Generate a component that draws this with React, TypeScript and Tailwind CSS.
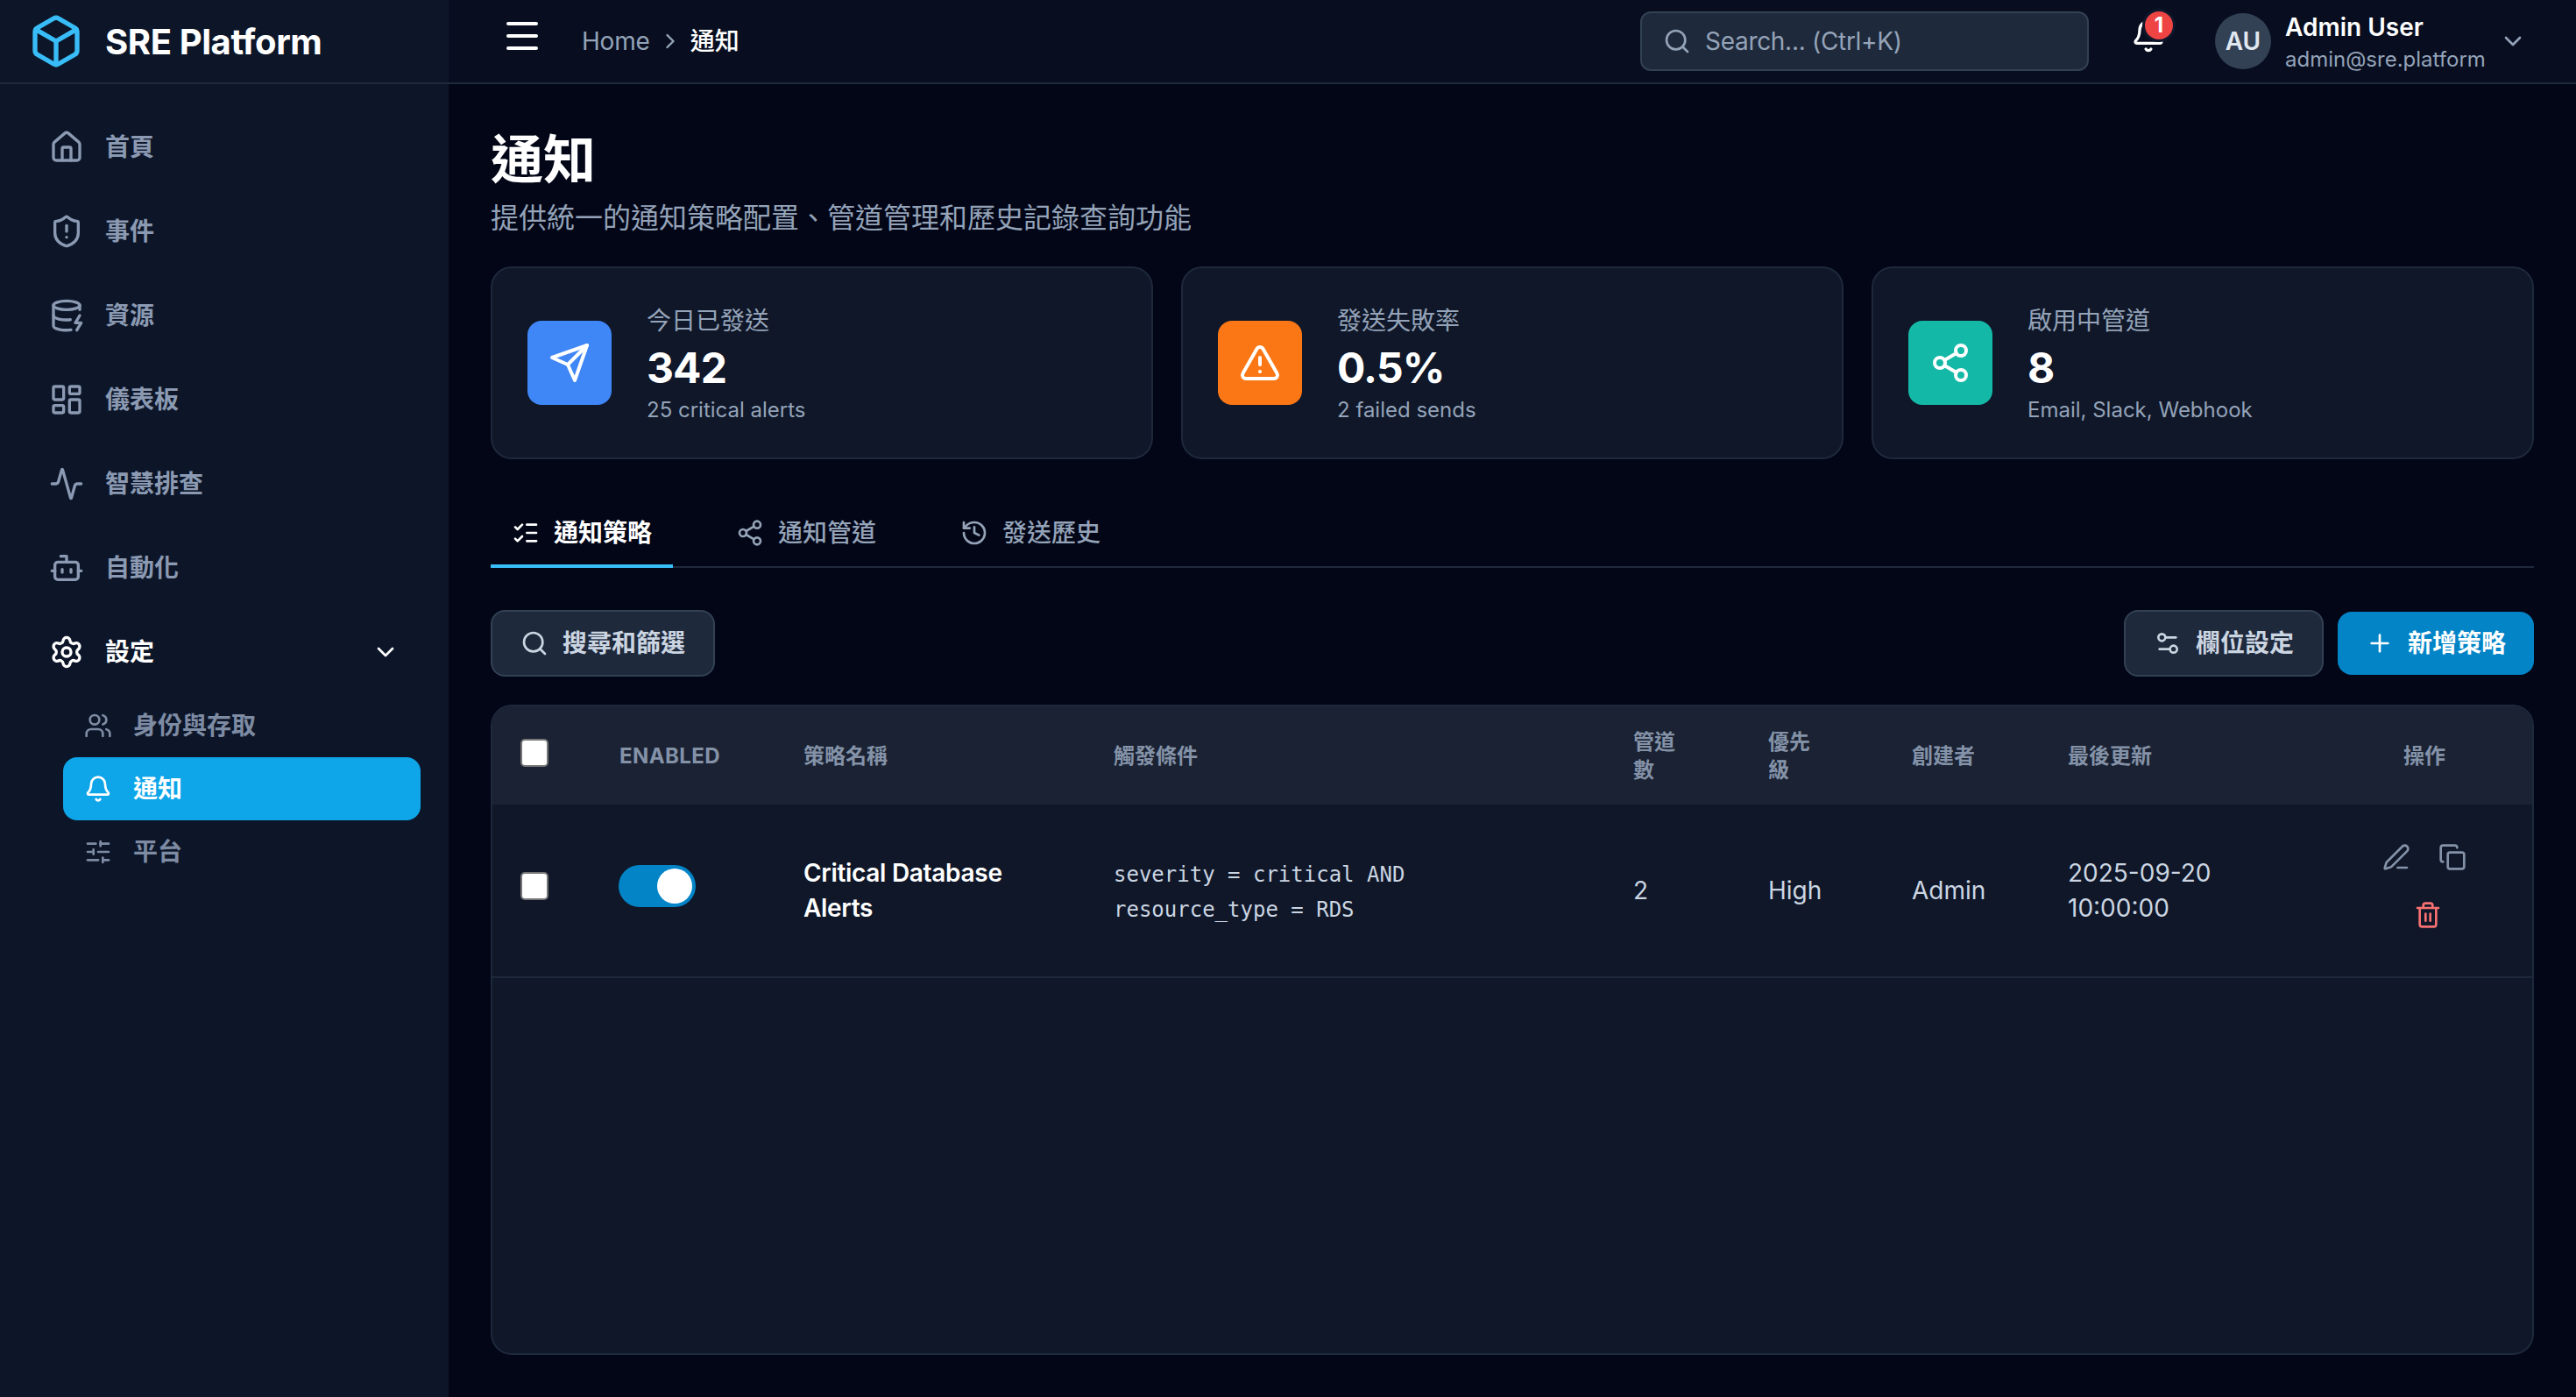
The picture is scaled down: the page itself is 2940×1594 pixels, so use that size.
import React from "react";
import {
  Box, House, ShieldAlert, DatabaseZap, LayoutDashboard, Activity, Bot, Settings, ChevronDown, ChevronRight,
  Users, Bell, SlidersHorizontal, Menu, Search, TriangleAlert, Share2, ListChecks, History, Settings2,
  Plus, PenLine, Copy, Trash2,
} from "lucide-react";

const navItems = [
  { label: "首頁", Icon: House },
  { label: "事件", Icon: ShieldAlert },
  { label: "資源", Icon: DatabaseZap },
  { label: "儀表板", Icon: LayoutDashboard },
  { label: "智慧排查", Icon: Activity },
  { label: "自動化", Icon: Bot },
];

function SendIcon({ size }: { size: number }) {
  return (
    <svg width={size} height={size} viewBox="0 0 24 24" fill="none" stroke="currentColor" strokeWidth={2} strokeLinecap="round" strokeLinejoin="round">
      <path d="m22 2-7 20-4-9-9-4Z" />
      <path d="M22 2 11 13" />
    </svg>
  );
}

function Sidebar() {
  return (
    <aside className="flex h-full w-[512px] shrink-0 flex-col bg-[#0d1629]">
      <div className="flex h-[96px] shrink-0 items-center gap-[24px] border-b-2 border-[#1e293b] pl-[32px]">
        <Box size={64} strokeWidth={2} className="text-[#38bdf8]" />
        <span className="pt-[2px] text-[40px] leading-[60px] font-bold tracking-[-0.4px] text-white">SRE Platform</span>
      </div>
      <nav className="flex flex-col px-[40px] pt-[24px]">
        {navItems.map(({ label, Icon }) => (
          <div key={label} className="flex h-[96px] items-center gap-[24px] pl-[16px] text-[#8b9ab2]">
            <Icon size={40} strokeWidth={2} />
            <span className="text-[28px] leading-[40px] font-semibold">{label}</span>
          </div>
        ))}
        <div className="flex h-[96px] items-center gap-[24px] pl-[16px] text-white">
          <Settings size={40} strokeWidth={2} />
          <span className="flex-1 text-[28px] leading-[40px] font-bold">設定</span>
          <ChevronDown size={32} strokeWidth={2} className="mr-[16px]" />
        </div>
        <div className="ml-[32px] flex w-[408px] flex-col">
          <div className="flex h-[72px] items-center gap-[24px] px-[24px] text-[#7d8ba3]">
            <Users size={32} strokeWidth={2} />
            <span className="text-[28px] leading-[40px] font-semibold">身份與存取</span>
          </div>
          <div className="flex h-[72px] items-center gap-[24px] rounded-[16px] bg-[#0ea5e9] px-[24px] text-white">
            <Bell size={32} strokeWidth={2} />
            <span className="text-[28px] leading-[40px] font-bold">通知</span>
          </div>
          <div className="flex h-[72px] items-center gap-[24px] px-[24px] text-[#7d8ba3]">
            <SlidersHorizontal size={32} strokeWidth={2} />
            <span className="text-[28px] leading-[40px] font-semibold">平台</span>
          </div>
        </div>
      </nav>
    </aside>
  );
}

function TopBar() {
  return (
    <header className="flex h-[96px] shrink-0 items-center justify-between border-b-2 border-[#1e293b] bg-[#080e20] pl-[60px] pr-[56px]">
      <div className="flex items-center">
        <Menu size={48} strokeWidth={2} className="mb-[12px] text-white" />
        <span className="ml-[44px] text-[28px] leading-[40px] tracking-[-0.2px] text-[#94a3b8]">Home</span>
        <ChevronRight size={28} strokeWidth={2} className="mx-[9px] text-[#94a3b8]" />
        <span className="text-[28px] leading-[40px] font-medium text-white">通知</span>
      </div>
      <div className="flex items-center">
        <div className="flex h-[68px] w-[512px] items-center gap-[16px] rounded-[12px] border-2 border-[#334155] bg-[#1e293b] pl-[24px]">
          <Search size={32} strokeWidth={2} className="text-[#94a3b8]" />
          <span className="text-[28px] leading-[40px] tracking-[-0.3px] text-[#94a3b8]">Search... (Ctrl+K)</span>
        </div>
        <div className="relative mb-[12px] ml-[48px] h-[40px] w-[40px] text-white">
          <Bell size={40} strokeWidth={2} />
          <span className="absolute -top-[11px] left-[13px] flex h-[38px] w-[38px] items-center justify-center rounded-full border-[3px] border-[#0f172a] bg-[#ef4444] text-[24px] leading-none font-bold text-white">1</span>
        </div>
        <div className="ml-[56px] flex h-[64px] w-[64px] items-center justify-center rounded-full bg-[#334155] text-[28px] font-semibold text-[#e2e8f0]">AU</div>
        <div className="ml-[16px] flex w-[226px] flex-col pt-[2px]">
          <span className="text-[28px] leading-[40px] font-semibold text-white">Admin User</span>
          <span className="text-[24px] leading-[34px] text-[#94a3b8]">admin@sre.platform</span>
        </div>
        <ChevronDown size={32} strokeWidth={2} className="ml-[18px] text-[#94a3b8]" />
      </div>
    </header>
  );
}

const stats = [
  { label: "今日已發送", value: "342", sub: "25 critical alerts", Icon: SendIcon, color: "bg-[#3f86f6]" },
  { label: "發送失敗率", value: "0.5%", sub: "2 failed sends", Icon: TriangleAlert, color: "bg-[#fb7716]" },
  { label: "啟用中管道", value: "8", sub: "Email, Slack, Webhook", Icon: Share2, color: "bg-[#14b8a6]" },
];

function StatCards() {
  return (
    <div className="mt-[31px] grid grid-cols-3 gap-[32px]">
      {stats.map(({ label, value, sub, Icon, color }) => (
        <div key={label} className="flex h-[220px] items-center gap-[40px] rounded-[24px] border-2 border-[#1e293b] bg-[#0f1729] px-[40px]">
          <div className={`flex h-[96px] w-[96px] items-center justify-center rounded-[16px] text-white ${color}`}>
            <Icon size={48} />
          </div>
          <div className="flex flex-col pt-[2px]">
            <span className="text-[28px] leading-[40px] text-[#94a3b8]">{label}</span>
            <span className="pt-[2px] text-[48px] leading-[64px] font-bold tracking-[-0.9px] text-white">{value}</span>
            <span className="text-[24px] leading-[32px] text-[#94a3b8]">{sub}</span>
          </div>
        </div>
      ))}
    </div>
  );
}

function Tabs() {
  const tabs = [
    { label: "通知策略", Icon: ListChecks, active: true },
    { label: "通知管道", Icon: Share2, active: false },
    { label: "發送歷史", Icon: History, active: false },
  ];
  return (
    <div className="mt-[44px] flex gap-[48px] border-b-2 border-[#1e293b]">
      {tabs.map(({ label, Icon, active }) => (
        <div
          key={label}
          className={
            active
              ? "-mb-[2px] flex h-[80px] items-center gap-[16px] border-b-4 border-[#38bdf8] px-[24px] pt-[4px] text-white"
              : "-mb-[2px] flex h-[80px] items-center gap-[16px] border-b-4 border-transparent px-[24px] pt-[4px] text-[#94a3b8]"
          }
        >
          <Icon size={32} strokeWidth={2} />
          <span className={active ? "text-[28px] leading-[40px] font-semibold" : "text-[28px] leading-[40px] font-medium"}>{label}</span>
        </div>
      ))}
    </div>
  );
}

function Toolbar() {
  return (
    <div className="mt-[48px] flex items-center justify-between">
      <button className="flex h-[76px] items-center gap-[16px] rounded-[16px] border-2 border-[#334155] bg-[#1e293b] px-[32px] text-[#cbd5e1]">
        <Search size={32} strokeWidth={2} />
        <span className="text-[28px] leading-[40px] font-semibold">搜尋和篩選</span>
      </button>
      <div className="flex items-center gap-[16px]">
        <button className="flex h-[76px] items-center gap-[16px] rounded-[16px] border-2 border-[#334155] bg-[#1e293b] px-[32px] text-[#cbd5e1]">
          <Settings2 size={32} strokeWidth={2} />
          <span className="text-[28px] leading-[40px] font-semibold">欄位設定</span>
        </button>
        <button className="flex h-[72px] items-center gap-[16px] rounded-[16px] bg-[#0284c7] px-[32px] text-white">
          <Plus size={32} strokeWidth={2} />
          <span className="text-[28px] leading-[40px] font-semibold">新增策略</span>
        </button>
      </div>
    </div>
  );
}

const thClass = "px-[32px] pt-[2px] align-middle text-[24px] leading-[32px] font-bold text-[#8492a8]";
const tdClass = "border-b-2 border-[#1e293b] px-[32px] align-middle";
const cellText = "text-[28px] leading-[40px] text-[#cbd5e1]";
const boxClass = "block h-[32px] w-[32px] appearance-none rounded-[5px] border-2 border-[#767676] bg-white";

function PolicyTable() {
  return (
    <div className="mt-[32px] min-h-0 flex-1 overflow-hidden rounded-[24px] border-2 border-[#1e293b] bg-[#0f1729]">
      <table className="w-full table-fixed border-collapse">
        <colgroup>
          <col className="w-[113px]" />
          <col className="w-[210px]" />
          <col className="w-[354px]" />
          <col className="w-[593px]" />
          <col className="w-[154px]" />
          <col className="w-[164px]" />
          <col className="w-[178px]" />
          <col className="w-[316px]" />
          <col className="w-[246px]" />
        </colgroup>
        <thead>
          <tr className="h-[112px] bg-[#1a2233]">
            <th className={`${thClass} text-left`}><input type="checkbox" className={`${boxClass} mb-[8px]`} /></th>
            <th className={`${thClass} text-left tracking-[0.4px]`}>ENABLED</th>
            <th className={`${thClass} text-left`}>策略名稱</th>
            <th className={`${thClass} text-left`}>觸發條件</th>
            <th className={`${thClass} text-left`}>管道<br />數</th>
            <th className={`${thClass} text-left`}>優先<br />級</th>
            <th className={`${thClass} text-left`}>創建者</th>
            <th className={`${thClass} text-left`}>最後更新</th>
            <th className={`${thClass} text-center`}>操作</th>
          </tr>
        </thead>
        <tbody>
          <tr className="h-[197px]">
            <td className={tdClass}><input type="checkbox" className={`${boxClass} mb-[10px]`} /></td>
            <td className={tdClass}>
              <div className="mb-[10px] -ml-[1px] flex h-[48px] w-[88px] items-center justify-end rounded-full bg-[#0284c7] pr-[4px]">
                <div className="h-[40px] w-[40px] rounded-full bg-white" />
              </div>
            </td>
            <td className={tdClass}><div className="text-[28px] leading-[40px] font-semibold tracking-[-0.3px] text-white">Critical Database Alerts</div></td>
            <td className={tdClass}><div className="pt-[4px] font-['DejaVu_Sans_Mono',monospace] text-[24px] leading-[40px] text-[#cbd5e1]">severity = critical AND<br />resource_type = RDS</div></td>
            <td className={tdClass}><div className={cellText}>2</div></td>
            <td className={tdClass}><div className={cellText}>High</div></td>
            <td className={tdClass}><div className={cellText}>Admin</div></td>
            <td className={tdClass}><div className={cellText}>2025-09-20 10:00:00</div></td>
            <td className={tdClass}>
              <div className="mb-[10px] flex flex-wrap justify-center">
                <span className="flex h-[66px] w-[64px] items-center justify-center text-[#8492a8]"><PenLine size={32} strokeWidth={2} /></span>
                <span className="flex h-[66px] w-[64px] items-center justify-center text-[#8492a8]"><Copy size={32} strokeWidth={2} /></span>
                <span className="flex h-[66px] w-[72px] items-center justify-center pl-[8px] text-[#f87171]"><Trash2 size={32} strokeWidth={2} /></span>
              </div>
            </td>
          </tr>
        </tbody>
      </table>
    </div>
  );
}

export default function App() {
  return (
    <div className="flex h-[1594px] w-full overflow-hidden bg-[#020617] font-['Inter','Noto_Sans_CJK_TC',sans-serif]">
      <Sidebar />
      <main className="flex min-w-0 flex-1 flex-col">
        <TopBar />
        <div className="flex min-h-0 flex-1 flex-col px-[48px] pt-[48px] pb-[48px]">
          <h1 className="pt-[2px] text-[60px] leading-[72px] font-bold text-white">通知</h1>
          <p className="mt-[7px] text-[32px] leading-[48px] text-[#94a3b8]">提供統一的通知策略配置、管道管理和歷史記錄查詢功能</p>
          <StatCards />
          <Tabs />
          <Toolbar />
          <PolicyTable />
        </div>
      </main>
    </div>
  );
}
